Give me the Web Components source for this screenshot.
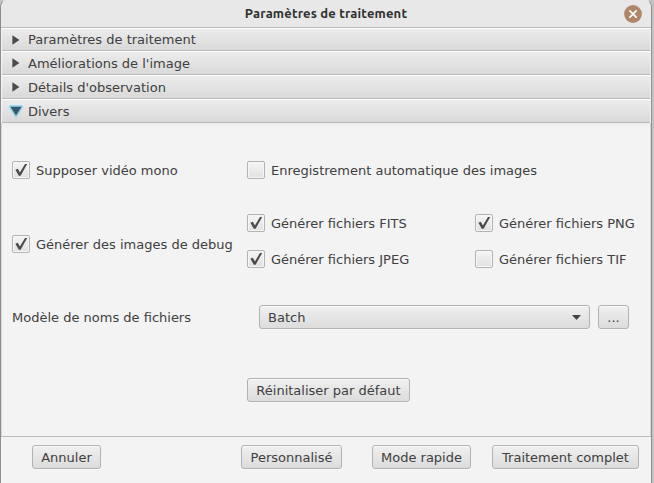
<!DOCTYPE html>
<html lang="fr">
<head>
<meta charset="utf-8">
<title>Paramètres de traitement</title>
<style>
html,body{margin:0;height:100%;overflow:hidden}
body{background:#c4c4c4;color:#404040;font:13px/16px "DejaVu Sans",sans-serif}
.files{display:grid;grid-template-columns:228px auto;grid-auto-rows:36px;align-items:center}
</style>
</head>
<body>
<settings-window heading="Paramètres de traitement">
  <titled-pane label="Paramètres de traitement"></titled-pane>
  <titled-pane label="Améliorations de l'image"></titled-pane>
  <titled-pane label="Détails d'observation"></titled-pane>
  <titled-pane label="Divers" open>
    <form-grid>
      <check-box checked>Supposer vidéo mono</check-box>
      <check-box>Enregistrement automatique des images</check-box>
      <check-box checked>Générer des images de debug</check-box>
      <div class="files">
        <check-box checked>Générer fichiers FITS</check-box>
        <check-box checked>Générer fichiers PNG</check-box>
        <check-box checked>Générer fichiers JPEG</check-box>
        <check-box>Générer fichiers TIF</check-box>
      </div>
      <span style="padding-top:1px">Modèle de noms de fichiers</span>
      <div style="display:flex;gap:8px;padding-left:12px">
        <combo-box style="width:331px">Batch</combo-box>
        <push-button style="width:31px">...</push-button>
      </div>
      <span></span>
      <push-button style="width:163px">Réinitaliser par défaut</push-button>
    </form-grid>
  </titled-pane>
  <push-button slot="actions" style="width:69px;margin-right:140px">Annuler</push-button>
  <push-button slot="actions" style="width:101px;margin-right:30px">Personnalisé</push-button>
  <push-button slot="actions" style="width:99px;margin-right:21px">Mode rapide</push-button>
  <push-button slot="actions" style="width:147px">Traitement complet</push-button>
</settings-window>
<script>
class Base extends HTMLElement {
  connectedCallback() {
    if (this.shadowRoot) return;
    this.attachShadow({mode: 'open'}).innerHTML =
      '<style>*{box-sizing:border-box}:host{box-sizing:border-box}' + this.css() + '</style>' + this.html();
  }
}
customElements.define('settings-window', class extends Base {
  css() { return `
    :host{display:flex;flex-direction:column;width:652px;height:484px;background:#f3f3f3;
      border:1px solid #8e8e8e;border-top-color:#dcdcdc;border-bottom:0;border-radius:8px 8px 0 0;overflow:hidden;margin-top:-1px}
    header{display:grid;grid-template-columns:1fr auto 1fr;align-items:center;height:28px;background:#e8e8e8;border-bottom:1px solid #bcbcbc;flex:none}
    h1{grid-column:2;margin:0;font:bold 13px/16px Ubuntu,"Noto Sans",sans-serif;color:#303030;letter-spacing:.17px;padding-bottom:1px}
    svg{justify-self:end;margin-right:9px}
    main{flex:none;padding:0 1px}
    footer{display:flex;align-items:flex-start;border-top:1px solid #bcbfbc;padding:8px 0 0 31px;flex:1}`; }
  html() { return `<header><h1>${this.getAttribute('heading')}</h1>
    <svg width="18" height="18" viewBox="0 0 18 18"><circle cx="9" cy="9" r="8.9" fill="#b0866a"/><path d="M5.4 5.4l7.2 7.2m0-7.2l-7.2 7.2" stroke="#fff" stroke-width="1.7"/></svg></header>
    <main><slot></slot></main><footer><slot name="actions"></slot></footer>`; }
});
customElements.define('titled-pane', class extends Base {
  css() { return `
    :host{display:block}
    .bar{display:flex;align-items:center;height:24px;padding-left:8px;border-top:1px solid #fff;border-bottom:1px solid #bababa;
      background:linear-gradient(#ececec,#d9d9d9)}
    .bar span{padding-top:2px}
    :host(:first-child) .bar{height:23px}
    :host(:first-child) .bar span{padding-top:0}
    svg{flex:none;width:18px;height:18px;overflow:visible}
    .body{height:313px;background:linear-gradient(#ececec,#f3f3f3 5px);border:solid #d6d6d6;border-width:0 1px;margin:0 -1px}`; }
  html() {
    const open = this.hasAttribute('open');
    const mark = open
      ? '<path d="M.5 4.7h11L6 13.5z" fill="#8fd6f2" stroke="#8fd6f2" stroke-width="3.4" stroke-linejoin="round" opacity=".85"/><path d="M.3 4.8h11.4L6 13.4z" fill="#36596a"/>'
      : '<path d="M2.4 4.3v9.4L9.4 9z" fill="#4b4b4b"/>';
    return `<div class="bar"><svg viewBox="0 0 18 18">${mark}</svg><span>${this.getAttribute('label')}</span></div>` +
      (open ? '<div class="body"><slot></slot></div>' : '');
  }
});
customElements.define('form-grid', class extends Base {
  css() { return `:host{display:grid;grid-template-columns:235px auto;grid-template-rows:36px 77px 36px 50px;
    row-gap:17px;align-items:center;align-content:start;padding:29px 0 0 10px}
    ::slotted(.files){align-self:start}
    ::slotted(push-button){align-self:end}`; }
  html() { return '<slot></slot>'; }
});
customElements.define('check-box', class extends Base {
  css() { return `
    :host{display:flex;align-items:center;gap:6px;white-space:nowrap}
    i{display:block;width:18px;height:18px;border:1px solid #b3b3b3;border-radius:2px;background:linear-gradient(#f5f5f5,#e0e0e0);box-shadow:inset 0 0 0 1px #f6f6f6;flex:none}
    span{padding-top:2px}
    svg{display:block}`; }
  html() { return `<i>${this.hasAttribute('checked') ? '<svg width="16" height="16" viewBox="0 0 16 16"><path d="M2.4 7.8L4.8 6.8 6.9 10.4 12 2 14.2 2 7.6 13.7H5.8z" fill="#4a4a4a"/></svg>' : ''}</i><span><slot></slot></span>`; }
});
customElements.define('push-button', class extends Base {
  css() { return `:host{display:flex;align-items:center;justify-content:center;height:24px;flex:none;white-space:nowrap;
    border:1px solid #b2b2b2;border-radius:3px;background:linear-gradient(#f0f0f0,#dcdcdc);box-shadow:inset 0 1px #fafafa,0 1px #f8f8f8}
    span{padding-top:2px}`; }
  html() { return '<span><slot></slot></span>'; }
});
customElements.define('combo-box', class extends Base {
  css() { return `:host{display:flex;align-items:center;justify-content:space-between;height:24px;padding:0 8px;
    border:1px solid #b2b2b2;border-radius:3px;background:linear-gradient(#f0f0f0,#dcdcdc);box-shadow:inset 0 1px #fafafa,0 1px #f8f8f8}
    span{padding-top:2px}`; }
  html() { return '<span><slot></slot></span><svg width="9" height="5" viewBox="0 0 9 5"><path d="M0 0h9L4.5 5z" fill="#444"/></svg>'; }
});
</script>
</body>
</html>
